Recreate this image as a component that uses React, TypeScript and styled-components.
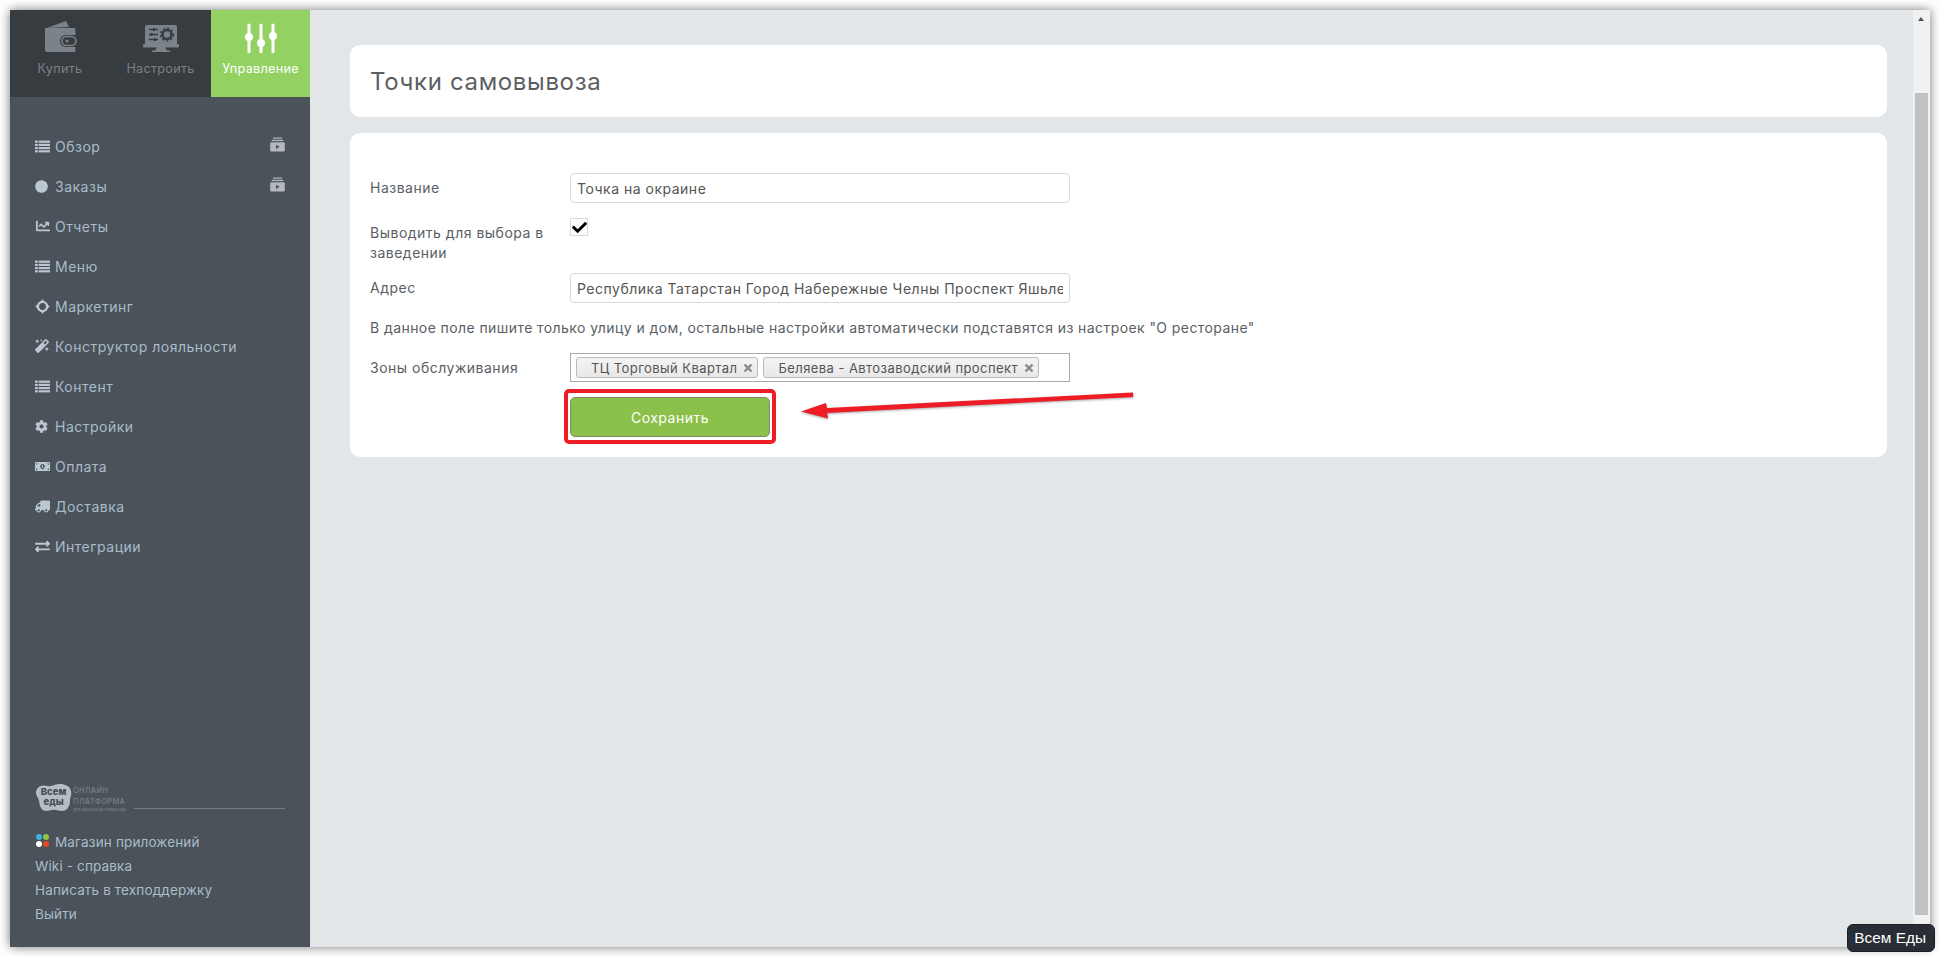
import React from 'react';
import styled, { createGlobalStyle } from 'styled-components';
import { FaCircle, FaChartLine, FaMagic, FaCog, FaMoneyBillAlt, FaTruck, FaExchangeAlt, FaCheck } from 'react-icons/fa';

const Global = createGlobalStyle`
  html, body { margin: 0; padding: 0; background: #fff; height: 957px; overflow: hidden; }
  * { box-sizing: border-box; }
  body { font-family: Inter, "Noto Sans", "Liberation Sans", sans-serif; font-size: 14px; color: #555; }
`;

const Page = styled.div`
  position: relative;
  margin: 10px;
  height: 937px;
  display: flex;
  background: #e2e6e9;
  box-shadow: 0 0 10px rgba(0, 0, 0, 0.55);
`;
const Sidebar = styled.aside`
  width: 300px;
  flex: none;
  display: flex;
  flex-direction: column;
  justify-content: space-between;
  background: #4b5259;
`;
const Tabs = styled.nav`
  display: grid;
  grid-template-columns: 100px 101px 99px;
  height: 87px;
  background: #373c40;
`;
const Tab = styled.div<{ $active?: boolean }>`
  display: flex;
  flex-direction: column;
  align-items: center;
  padding-top: 11px;
  gap: 8px;
  font-size: 12.6px;
  line-height: 16px;
  letter-spacing: 0.3px;
  color: ${p => (p.$active ? '#fff' : '#7b8085')};
  background: ${p => (p.$active ? '#93d262' : 'transparent')};
  svg { display: block; height: 32px; width: 38px; }
`;
const Menu = styled.ul`
  list-style: none;
  margin: 0;
  padding: 29px 0 0 25px;
`;
const MenuItem = styled.li`
  height: 40px;
  display: flex;
  align-items: center;
  padding-right: 25px;
  color: #a9bcc9;
  font-size: 14px;
  letter-spacing: 0.5px;
`;
const MenuIcon = styled.span`
  width: 20px;
  flex: none;
  display: flex;
  align-items: center;
  svg { display: block; width: 15px; height: 15px; fill: #bcc8d1; }
`;
const MenuLabel = styled.span`
  flex: 1;
`;
const Badge = styled.svg`
  width: 15px;
  height: 15px;
  flex: none;
  margin-top: -3px;
`;
const Foot = styled.div`
  padding: 0 25px 21px;
`;
const Brand = styled.div`
  display: flex;
  align-items: flex-end;
  height: 28px;
  margin-bottom: 18px;
`;
const Blob = styled.div`
  position: relative;
  width: 37px;
  height: 28px;
  flex: none;
  svg { position: absolute; inset: 0; width: 100%; height: 100%; }
`;
const BlobText = styled.span`
  position: absolute;
  inset: 3px 0 0;
  text-align: center;
  font-size: 9.5px;
  line-height: 10px;
  font-weight: 800;
  color: #474d54;
`;
const BrandText = styled.div`
  width: 61px;
  margin-left: 1px;
  flex: none;
  color: #7a8087;
  font-size: 7.5px;
  font-weight: 500;
  line-height: 11px;
  letter-spacing: 0.3px;
  white-space: nowrap;
`;
const Tiny = styled.div`
  font-size: 4px;
  line-height: 5px;
  letter-spacing: 0;
`;
const BrandLine = styled.div`
  flex: 1;
  height: 1px;
  margin-bottom: 3px;
  background: #767c83;
`;
const FootLink = styled.div`
  height: 24px;
  display: flex;
  align-items: center;
  color: #a9bcc9;
  font-size: 13.5px;
  letter-spacing: 0.15px;
`;
const Dots = styled.span`
  display: grid;
  grid-template-columns: 6px 6px;
  gap: 1px;
  margin: -4px 6px 0 1px;
`;
const Dot = styled.i<{ $c: string }>`
  width: 6px;
  height: 6px;
  border-radius: 50%;
  background: ${p => p.$c};
`;
const Main = styled.main`
  flex: 1;
  padding: 35px 26px 0 40px;
`;
const Card = styled.section`
  background: #fff;
  border-radius: 10px;
`;
const TitleCard = styled(Card)`
  height: 72px;
  margin-bottom: 16px;
  padding: 0 20px;
  display: flex;
  align-items: center;
`;
const Title = styled.h1`
  margin: 0;
  font-size: 24px;
  font-weight: 400;
  letter-spacing: 0.65px;
  color: #5a5f63;
`;
const FormCard = styled(Card)`
  height: 324px;
  padding: 40px 20px 20px;
`;
const Row = styled.div<{ $gap?: number }>`
  display: grid;
  grid-template-columns: 200px 500px;
  align-items: start;
  margin-bottom: ${p => p.$gap ?? 15}px;
`;
const Label = styled.label`
  display: block;
  padding-top: 5px;
  line-height: 20px;
  letter-spacing: 0.5px;
  color: #5a6066;
`;
const Input = styled.input`
  width: 500px;
  height: 30px;
  padding: 0 6px;
  border: 1px solid #d7dadc;
  border-radius: 4px;
  font: inherit;
  letter-spacing: 0.5px;
  color: #555;
  background: #fff;
  outline: none;
`;
const Check = styled.span`
  width: 18px;
  height: 18px;
  display: flex;
  align-items: center;
  justify-content: center;
  border: 1px solid #d7dadc;
  background: #fff;
  svg { width: 15px; height: 15px; fill: #000; }
`;
const Help = styled.p`
  margin: 0 0 15px;
  line-height: 20px;
  letter-spacing: 0.42px;
  color: #5a6066;
`;
const Multi = styled.div`
  width: 500px;
  height: 29px;
  display: flex;
  gap: 5px;
  padding: 3px 5px;
  border: 1px solid #aaa;
  background: #fff;
`;
const Chip = styled.span`
  height: 21px;
  display: flex;
  align-items: center;
  justify-content: space-between;
  padding: 0 4px 0 14px;
  border: 1px solid #bbb;
  border-radius: 3px;
  background: linear-gradient(#f4f4f4, #e8e8e8);
  font-size: 13px;
  letter-spacing: 0.43px;
  color: #555;
  white-space: nowrap;
`;
const ChipX = styled.svg`
  margin-left: 6px;
  width: 10px;
  height: 10px;
  flex: none;
`;
const ButtonWrap = styled.div`
  position: relative;
  grid-column: 2;
  width: 200px;
  height: 40px;
`;
const SaveButton = styled.button`
  width: 200px;
  height: 40px;
  border: 1px solid #7d8a72;
  border-radius: 5px;
  background: #8bc14a;
  color: #fff;
  font: inherit;
  letter-spacing: 0.5px;
`;
const Highlight = styled.div`
  position: absolute;
  inset: -8px -6px -7px -6px;
  border: 4px solid #ee1c25;
  border-radius: 5px;
  pointer-events: none;
`;
const Arrow = styled.svg`
  position: absolute;
  left: 225px;
  top: -10px;
  width: 345px;
  height: 40px;
  filter: drop-shadow(0 1px 1px rgba(0, 0, 0, 0.35));
`;
const Scrollbar = styled.div`
  width: 17px;
  flex: none;
  display: flex;
  flex-direction: column;
  background: #f1f1f1;
`;
const UpArrow = styled.span`
  width: 0;
  height: 0;
  margin: 7px 0 0 5px;
  border-left: 3.5px solid transparent;
  border-right: 3.5px solid transparent;
  border-bottom: 4px solid #505050;
`;
const Thumb = styled.div`
  width: 13px;
  height: 822px;
  margin: 72px 0 0 2px;
  background: #c1c1c1;
`;
const Tooltip = styled.div`
  position: absolute;
  right: -5px;
  bottom: -5px;
  height: 28px;
  padding: 0 8px 0 6px;
  display: flex;
  align-items: center;
  border-radius: 6px;
  border: 1px solid #1a1d22;
  background: #292d36;
  color: #fff;
  font-family: "Liberation Sans", Arial, sans-serif;
  font-size: 15.4px;
`;

const ListIcon = () => (
  <svg viewBox="0 0 14 14">
    {[1.5, 4.5, 7.5, 10.5].map(y => (
      <React.Fragment key={y}>
        <rect x="0" y={y} width="2.6" height="2" />
        <rect x="3.4" y={y} width="10.6" height="2" />
      </React.Fragment>
    ))}
  </svg>
);
const TargetIcon = () => (
  <svg viewBox="0 0 14 14">
    <circle cx="7" cy="7" r="4.300" fill="none" stroke="#bcc8d1" strokeWidth="2.200" />
    <path d="M7 0l1.800 2.800H5.200zM7 14l-1.800-2.800h3.600zM0 7l2.800-1.800v3.600zM14 7l-2.800 1.800V5.200z" />
  </svg>
);
const Archive = () => (
  <Badge viewBox="0 0 15 15">
    <rect x="3" y="0.5" width="9" height="1.2" fill="#b3b8bc" />
    <rect x="1.8" y="2.8" width="11.4" height="1.3" fill="#b3b8bc" />
    <path d="M1 5.200h13a.8.8 0 0 1 .8.8v7.400a1 1 0 0 1-1 1H1.200a1 1 0 0 1-1-1V6a.8.8 0 0 1 .8-.8z" fill="#b3b8bc" />
    <path d="M6 7.700l3.600 2.100L6 11.900z" fill="#4b5259" />
  </Badge>
);
const XMark = () => (
  <ChipX viewBox="0 0 10 10">
    <path d="M1.500 1.500l7 7M8.500 1.500l-7 7" stroke="#888" strokeWidth="2.400" />
  </ChipX>
);

const items: { t: string; i: React.ReactNode; b?: boolean }[] = [
  { t: 'Обзор', i: <ListIcon />, b: true },
  { t: 'Заказы', i: <FaCircle style={{ width: 13, height: 13 }} />, b: true },
  { t: 'Отчеты', i: <FaChartLine style={{ width: 16, height: 14 }} /> },
  { t: 'Меню', i: <ListIcon /> },
  { t: 'Маркетинг', i: <TargetIcon /> },
  { t: 'Конструктор лояльности', i: <FaMagic style={{ width: 14, height: 14 }} /> },
  { t: 'Контент', i: <ListIcon /> },
  { t: 'Настройки', i: <FaCog style={{ width: 13, height: 13 }} /> },
  { t: 'Оплата', i: <FaMoneyBillAlt /> },
  { t: 'Доставка', i: <FaTruck style={{ transform: 'scaleX(-1)' }} /> },
  { t: 'Интеграции', i: <FaExchangeAlt /> },
];

export default function App() {
  return (
    <>
      <Global />
      <Page>
        <Sidebar>
          <div>
            <Tabs>
              <Tab>
                <svg viewBox="0 0 38 32">
                  <path d="M6 7L25 0l3 6z" fill="#7b8288" />
                  <path d="M4 7h29a1.500 1.500 0 0 1 1.500 1.500V14H25a6 6 0 0 0 0 12h9.500v3.500A1.500 1.500 0 0 1 33 31H6a2 2 0 0 1-2-2z" fill="#7b8288" />
                  <rect x="21" y="15.500" width="14" height="9" rx="4.500" fill="none" stroke="#7b8288" strokeWidth="1.600" />
                  <circle cx="26" cy="20" r="1.500" fill="#7b8288" />
                </svg>
                <span>Купить</span>
              </Tab>
              <Tab>
                <svg viewBox="0 -4 38 32">
                  <rect x="3" y="0" width="32" height="20" rx="2" fill="#7b8288" />
                  <rect x="1" y="19" width="36" height="3.500" rx="1" fill="#7b8288" />
                  <path d="M15 22h8l2 3.500h3V27H10v-1.500h3z" fill="#7b8288" />
                  <circle cx="25" cy="9.500" r="4.500" fill="none" stroke="#373c40" strokeWidth="2.600" />
                  <circle cx="25" cy="9.500" r="6.500" fill="none" stroke="#373c40" strokeWidth="1.400" strokeDasharray="2 2.300" />
                  <path d="M7 4.500h9M7 9.500h9M7 14.500h9" stroke="#373c40" strokeWidth="1.500" />
                  <path d="M12 3v3M9.500 8v3M13 13v3" stroke="#373c40" strokeWidth="2" />
                </svg>
                <span>Настроить</span>
              </Tab>
              <Tab $active>
                <svg viewBox="0 -3 38 32">
                  <path d="M7 1v27M19 1v27M31 1v27" stroke="#fff" strokeWidth="3" strokeLinecap="round" />
                  <circle cx="7" cy="13" r="4" fill="#fff" />
                  <circle cx="19" cy="19" r="4" fill="#fff" />
                  <circle cx="31" cy="12" r="4" fill="#fff" />
                </svg>
                <span>Управление</span>
              </Tab>
            </Tabs>
            <Menu>
              {items.map(m => (
                <MenuItem key={m.t}>
                  <MenuIcon>{m.i}</MenuIcon>
                  <MenuLabel>{m.t}</MenuLabel>
                  {m.b && <Archive />}
                </MenuItem>
              ))}
            </Menu>
          </div>
          <Foot>
            <Brand>
              <Blob>
                <svg viewBox="0 0 37 28">
                  <path d="M2 5C4 1 9 1 13 2c4 1 7-2 12-2 5 0 10 2 11 7 1 4-1 6-1 10 0 5-3 10-8 10-4 0-6-2-10-1-4 1-9 2-11-2-2-3-1-6-3-10C1 11 0 8 2 5z" fill="#b5bcc2" />
                </svg>
                <BlobText>Всем<br />еды</BlobText>
              </Blob>
              <BrandText>
                ОНЛАЙН<br />ПЛАТФОРМА
                <Tiny>для бизнеса доставки еды</Tiny>
              </BrandText>
              <BrandLine />
            </Brand>
            <FootLink>
              <Dots>
                <Dot $c="#3ab4e6" /><Dot $c="#8cc63f" /><Dot $c="#ffffff" /><Dot $c="#e8491d" />
              </Dots>
              Магазин приложений
            </FootLink>
            <FootLink>Wiki - справка</FootLink>
            <FootLink>Написать в техподдержку</FootLink>
            <FootLink>Выйти</FootLink>
          </Foot>
        </Sidebar>
        <Main>
          <TitleCard><Title>Точки самовывоза</Title></TitleCard>
          <FormCard>
            <Row>
              <Label>Название</Label>
              <Input readOnly value="Точка на окраине" />
            </Row>
            <Row $gap={10}>
              <Label>Выводить для выбора в заведении</Label>
              <Check><FaCheck /></Check>
            </Row>
            <Row>
              <Label>Адрес</Label>
              <Input readOnly value="Республика Татарстан Город Набережные Челны Проспект Яшьлек 12" />
            </Row>
            <Help>В данное поле пишите только улицу и дом, остальные настройки автоматически подставятся из настроек "О ресторане"</Help>
            <Row>
              <Label>Зоны обслуживания</Label>
              <Multi>
                <Chip>ТЦ Торговый Квартал<XMark /></Chip>
                <Chip>Беляева - Автозаводский проспект<XMark /></Chip>
              </Multi>
            </Row>
            <Row>
              <ButtonWrap>
                <SaveButton>Сохранить</SaveButton>
                <Highlight />
                <Arrow viewBox="0 0 345 40">
                  <path d="M6 24.500L31 16l1 5 306-15.500.3 4.500-306 16 .7 5.500z" fill="#ee1c25" />
                </Arrow>
              </ButtonWrap>
            </Row>
          </FormCard>
        </Main>
        <Scrollbar>
          <UpArrow />
          <Thumb />
        </Scrollbar>
        <Tooltip>Всем Еды</Tooltip>
      </Page>
    </>
  );
}
